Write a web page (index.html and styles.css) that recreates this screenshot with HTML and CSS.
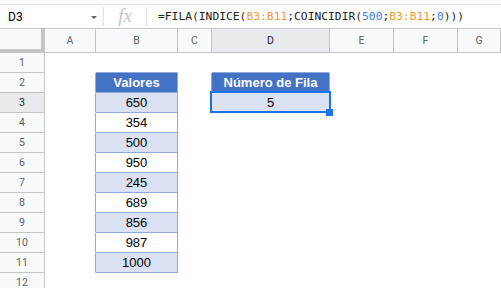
FILE: index.html
```html
<!DOCTYPE html>
<html lang="es">
<head>
    <meta charset="UTF-8">
    <meta name="viewport" content="width=device-width, initial-scale=1.0">
    <title>FILA con INDICE y COINCIDIR</title>
    <link rel="stylesheet" href="styles.css">
    <script>
        document.addEventListener('DOMContentLoaded', () => {
            'use strict'
            const colNames = ['A', 'B', 'C', 'D', 'E', 'F', 'G'];
            const rowCount = 12;
            const activeCol = 'D';
            const activeRow = 3;
            const values = [650, 354, 500, 950, 245, 689, 856, 987, 1000];
            const sheet = document.querySelector('#sheet');

            // contenido y estilo de las tablas
            const cells = {
                'B2': { text: 'Valores', cls: ['tbl-head'] },
                'D2': { text: 'Número de Fila', cls: ['tbl-head'] },
                'D3': { text: '5', cls: ['tbl-cell', 'band'] }
            };
            values.forEach((v, i) => {
                const row = i + 3;
                const cls = ['tbl-cell'];
                if (row % 2 === 1) cls.push('band');
                cells['B' + row] = { text: v, cls: cls };
            });
            // bordes de las celdas vecinas
            const edgeRight = ['C2', 'C3'];
            for (let r = 2; r <= 11; r++) edgeRight.push('A' + r);
            const edgeBottom = ['B1', 'D1'];

            const addCell = (classes, text) => {
                const div = document.createElement('div');
                div.classList.add(...classes);
                if (text !== undefined) div.innerText = text;
                sheet.appendChild(div);
                return div;
            };

            addCell(['corner']);
            colNames.forEach(name => {
                const cls = ['col-head'];
                if (name === activeCol) cls.push('active');
                addCell(cls, name);
            });
            for (let r = 1; r <= rowCount; r++) {
                const cls = ['row-head'];
                if (r === activeRow) cls.push('active');
                addCell(cls, r);
                colNames.forEach(name => {
                    const ref = name + r;
                    const data = cells[ref];
                    const classes = ['cell'].concat(data ? data.cls : []);
                    if (edgeRight.includes(ref)) classes.push('edge-r');
                    if (edgeBottom.includes(ref)) classes.push('edge-b');
                    addCell(classes, data ? data.text : undefined);
                });
            }
        });
    </script>
</head>
<body>
    <div class="formula-bar">
        <div class="name-box">
            <span>D3</span>
            <span class="caret"></span>
        </div>
        <div class="fx">fx</div>
        <div class="formula">=FILA(INDICE(<span class="ref">B3:B11</span>;COINCIDIR(<span class="num">500</span>;<span class="ref">B3:B11</span>;<span class="num">0</span>)))</div>
    </div>
    <div class="sheet-wrap">
        <div id="sheet" class="sheet"></div>
        <div class="selection"></div>
        <div class="fill-handle"></div>
    </div>
</body>
</html>
```

FILE: styles.css
```css
body {
  margin: 0;
  background: #fff;
  overflow: hidden;
  font-family: Roboto, "Liberation Sans", Arial, sans-serif;
}
.formula-bar {
  display: flex;
  align-items: center;
  box-sizing: border-box;
  height: 25px;
  margin-top: 4px;
  border-top: 1px solid #e1e1e1;
  border-bottom: 1px solid #c7c7c7;
}
.name-box {
  display: flex;
  align-items: center;
  justify-content: space-between;
  box-sizing: border-box;
  width: 103px;
  padding: 0 6px 0 8px;
  font-size: 12px;
  color: #000;
}
.caret {
  width: 0;
  height: 0;
  border-left: 3px solid transparent;
  border-right: 3px solid transparent;
  border-top: 3px solid #5f6368;
  margin-top: 1px;
}
.fx {
  box-sizing: border-box;
  width: 44px;
  height: 19px;
  border-left: 1px solid #e1e1e1;
  border-right: 1px solid #e1e1e1;
  text-align: center;
  font-family: "Liberation Serif", serif;
  font-style: italic;
  font-size: 19px;
  line-height: 17px;
  color: #c4c4c4;
}
.formula {
  padding-left: 11px;
  font-family: "DejaVu Sans Mono", "Liberation Mono", monospace;
  font-size: 11.3px;
  color: #222;
  white-space: nowrap;
}
.formula .ref {
  color: #f29b32;
}
.formula .num {
  color: #3d7de0;
}
.sheet-wrap {
  position: relative;
}
.sheet {
  display: grid;
  grid-template-columns: 45px 51px 82px 34px 118px 64px 64px 1fr;
  grid-template-rows: 24px repeat(12, 20px);
}
.sheet > div {
  box-sizing: border-box;
  display: flex;
  align-items: center;
  justify-content: center;
  border-right: 1px solid transparent;
  border-bottom: 1px solid transparent;
}
.sheet > .corner {
  background: #f8f9fa;
  border-right: 4px solid #c4c4c4;
  border-bottom: 4px solid #c4c4c4;
}
.sheet > .col-head,
.sheet > .row-head {
  background: #f8f9fa;
  border-color: #c4c4c4;
  font-size: 10.5px;
  color: #5f6368;
}
.sheet > .col-head.active,
.sheet > .row-head.active {
  background: #e8eaed;
  color: #202124;
}
.sheet > .cell {
  font-family: "Liberation Sans", Arial, sans-serif;
  font-size: 13px;
  color: #000;
}
.sheet > .tbl-head {
  background: #4472c4;
  border-color: #8eaadb;
  color: #fff;
  font-weight: bold;
}
.sheet > .tbl-cell {
  background: #fff;
  border-color: #8eaadb;
}
.sheet > .tbl-cell.band {
  background: #d9e1f2;
}
.sheet > .edge-r {
  border-right-color: #8eaadb;
}
.sheet > .edge-b {
  border-bottom-color: #8eaadb;
}
.selection {
  position: absolute;
  left: 210px;
  top: 62px;
  width: 121px;
  height: 22px;
  box-sizing: border-box;
  border: 2px solid #1a73e8;
  pointer-events: none;
}
.fill-handle {
  position: absolute;
  left: 326px;
  top: 80px;
  width: 7px;
  height: 7px;
  background: #1a73e8;
}
```
